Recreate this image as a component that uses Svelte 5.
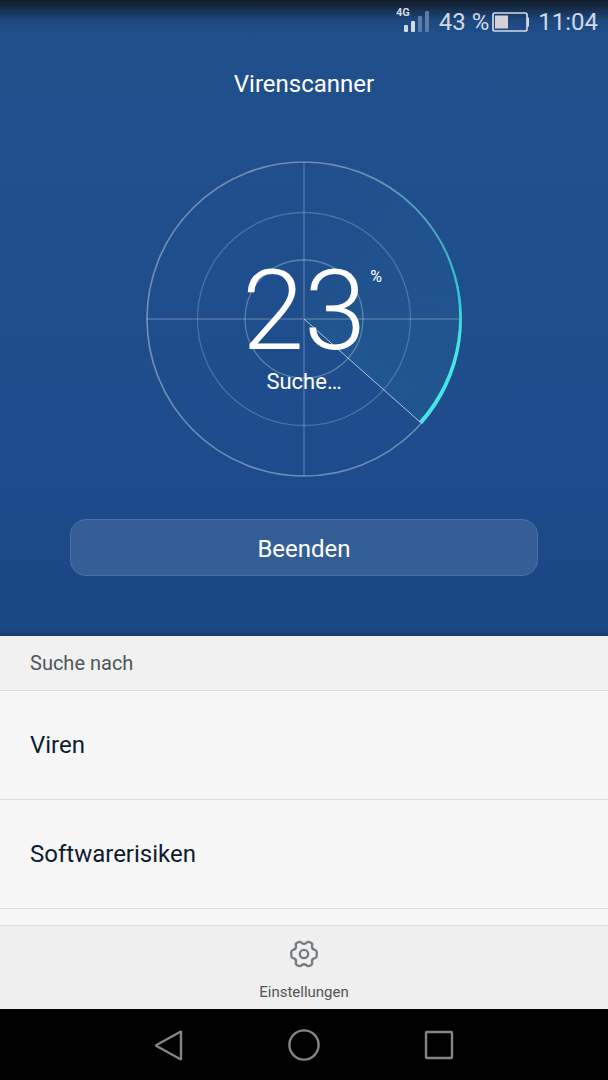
<script>
    let progress = 23;
    let scanning = true;
    const items = ["Viren", "Softwarerisiken"];

    // sweep geometry, the dial is centred on 0,0
    const sweep = 131.6;
    const rad = (sweep * Math.PI) / 180;
    const point = (r) => `${r * Math.sin(rad)} ${-r * Math.cos(rad)}`;
    const arc = `M0 -158A158 158 0 0 1 ${point(158)}L${point(154)}A156 156 0 0 0 0 -158Z`;

    function stop() {
        scanning = false;
    }
</script>

<div class="screen">
    <header class="scanner">
        <div class="status">
            <svg class="signal" width="34" height="28" viewBox="0 0 34 28">
                <text x="0" y="11">4G</text>
                <rect x="8" y="20" width="4" height="7" rx="1" />
                <rect x="15" y="16" width="4" height="11" rx="1" />
                <rect class="dim" x="22" y="11" width="4" height="16" rx="1" />
                <rect class="dim" x="29" y="6" width="4" height="21" rx="1" />
            </svg>
            <span class="battery-text">43 %</span>
            <svg class="battery" width="38" height="20" viewBox="0 0 38 20">
                <rect x="1" y="1" width="34" height="18" rx="2" fill="none" stroke="#d3d9e3" stroke-width="1.7" />
                <rect x="3" y="3.500" width="13" height="13" fill="#d3d2d6" />
                <path d="M35 5.500h2v9h-2z" fill="#d3d9e3" />
            </svg>
            <span class="clock">11:04</span>
        </div>

        <h1>Virenscanner</h1>

        <div class="dial">
            <div class="sweep"></div>
            <svg class="rings" width="320" height="320" viewBox="-160 -160 320 320">
                <defs>
                    <linearGradient id="glow" gradientUnits="userSpaceOnUse" x1="0" y1="-158" x2="0" y2="104">
                        <stop offset="0" stop-color="#46e6e6" stop-opacity="0" />
                        <stop offset="0.15" stop-color="#2cc0cc" stop-opacity="0.5" />
                        <stop offset="0.5" stop-color="#2fc9d3" stop-opacity="0.9" />
                        <stop offset="0.7" stop-color="#46e6e6" />
                        <stop offset="1" stop-color="#46e6e6" />
                    </linearGradient>
                </defs>
                <g fill="none" stroke="#fff">
                    <path d="M-157 0H157M0 -157V157" stroke-opacity="0.22" stroke-width="1.4" />
                    <circle r="59" stroke-opacity="0.28" stroke-width="1.3" />
                    <circle r="106.500" stroke-opacity="0.2" stroke-width="1.3" />
                    <circle r="157" stroke-opacity="0.36" stroke-width="1.7" />
                    <path d={`M0 0L${point(157)}`} stroke-opacity="0.65" />
                </g>
                <path d={arc} fill="url(#glow)" />
            </svg>
            <div class="reading">
                <div class="percent">{progress}<span class="unit">%</span></div>
                <div class="state">{scanning ? "Suche…" : "Beendet"}</div>
            </div>
        </div>

        <button class="stop" on:click={stop}>Beenden</button>
    </header>

    <main>
        <h2>Suche nach</h2>
        <ul>
            {#each items as item}
                <li>{item}</li>
            {/each}
        </ul>
    </main>

    <footer>
        <button class="settings">
            <svg width="30" height="30" viewBox="-15 -15 30 30" fill="none" stroke="#777c80" stroke-width="2.3" stroke-linejoin="round">
                <circle r="4.200" />
                <path d="M-5.500 -11.900Q-3.700 -12.500 -2.500 -11.200Q0 -9.200 2.500 -11.200Q3.700 -12.500 5.500 -11.900L7.200 -11Q8.800 -10 8 -8Q7.700 -4.600 11 -4.200Q12.700 -3.800 12.700 -2V2Q12.700 3.800 11 4.200Q7.700 4.600 8 8Q8.800 10 7.200 11L5.500 11.900Q3.700 12.500 2.500 11.200Q0 9.200 -2.500 11.200Q-3.700 12.500 -5.500 11.900L-7.200 11Q-8.800 10 -8 8Q-7.700 4.600 -11 4.200Q-12.700 3.800 -12.700 2V-2Q-12.700 -3.800 -11 -4.200Q-7.700 -4.600 -8 -8Q-8.800 -10 -7.200 -11Z" />
            </svg>
            <span>Einstellungen</span>
        </button>
    </footer>

    <nav>
        <button aria-label="Zurück">
            <svg width="34" height="34" viewBox="0 0 34 34">
                <path d="M29 4V31Q29 31.500 28 31L4.500 18Q3.700 17.500 4.500 17L28 4Q29 3.500 29 4Z" />
            </svg>
        </button>
        <button aria-label="Startseite">
            <svg width="34" height="34" viewBox="0 0 34 34">
                <circle cx="17" cy="17" r="14.600" />
            </svg>
        </button>
        <button aria-label="Letzte Apps">
            <svg width="34" height="34" viewBox="0 0 34 34">
                <rect x="4" y="4" width="26" height="26" rx="1" />
            </svg>
        </button>
    </nav>
</div>

<style>
    :global(body) {
        margin: 0;
        background: #000;
    }

    .screen {
        display: flex;
        flex-direction: column;
        min-height: 100vh;
        font-family: Roboto, "Liberation Sans", sans-serif;
        background: #f7f7f7;
    }

    button {
        font-family: inherit;
        border: none;
        cursor: pointer;
    }

    .scanner {
        display: flex;
        flex-direction: column;
        align-items: center;
        padding-bottom: 60px;
        color: #fff;
        background:
            linear-gradient(to bottom, #111d2b 0, #14273f 6px, rgba(28, 66, 116, 0.6) 20px, rgba(32, 80, 140, 0) 36px),
            linear-gradient(to top, rgba(20, 50, 96, 0.6) 0, rgba(20, 50, 96, 0) 6px),
            linear-gradient(to bottom, #20508c 0, #1f4e8c 45%, #1d4b8c 75%, #1b4784 92%);
    }

    .status {
        display: flex;
        justify-content: flex-end;
        align-items: center;
        align-self: stretch;
        height: 44px;
        padding: 0 10px;
        box-sizing: border-box;
        font-size: 24px;
        line-height: 28px;
        color: #d3d9e3;
    }

    .signal {
        margin-bottom: 6px;
        fill: #d3d9e3;
    }

    .signal text {
        font-size: 11px;
        font-weight: bold;
    }

    .signal .dim {
        fill: #5b7ca8;
    }

    .battery-text {
        margin: 0 3px 0 9px;
    }

    .clock {
        margin-left: 8px;
    }

    h1 {
        margin: 24px 0 0;
        font-size: 24px;
        line-height: 32px;
        font-weight: 400;
    }

    .dial {
        position: relative;
        width: 320px;
        height: 320px;
        margin: 59px 0 40px;
    }

    .sweep {
        position: absolute;
        inset: 3px;
        border-radius: 50%;
        background: conic-gradient(rgba(44, 130, 160, 0) 0, rgba(44, 130, 160, 0.18) 131.6deg, transparent 131.6deg);
    }

    .rings {
        position: absolute;
        inset: 0;
    }

    .reading {
        position: absolute;
        inset: 0;
        display: flex;
        flex-direction: column;
        align-items: center;
        gap: 9px;
        padding-top: 104px;
    }

    .percent {
        position: relative;
        font-size: 112px;
        line-height: 96px;
        font-weight: 300;
    }

    .unit {
        position: absolute;
        top: 6px;
        left: 100%;
        margin-left: 4px;
        font-size: 16px;
        line-height: 16px;
        font-weight: 400;
    }

    .state {
        font-size: 22px;
        line-height: 28px;
    }

    .stop {
        width: calc(100% - 140px);
        height: 57px;
        padding: 2px 0 0;
        border: 1px solid #4a71a3;
        border-radius: 16px;
        background: #345e96;
        color: #fff;
        font-size: 24px;
    }

    main {
        flex: 1;
    }

    h2 {
        margin: 0;
        padding: 1px 30px 0;
        border-bottom: 1px solid #dcdddf;
        background: #f1f1f1;
        color: #50565a;
        font-size: 20px;
        line-height: 53px;
        font-weight: 400;
    }

    ul {
        margin: 0;
        padding: 0;
        list-style: none;
    }

    li {
        padding: 1px 30px 0;
        border-bottom: 1px solid #dedede;
        color: #0e1c30;
        font-size: 24px;
        line-height: 107px;
    }

    footer {
        display: flex;
        justify-content: center;
        border-top: 1px solid #dedede;
        background: #efefef;
    }

    .settings {
        display: flex;
        flex-direction: column;
        align-items: center;
        gap: 13px;
        padding: 13px 20px 7px;
        background: none;
        color: #50565a;
        font-size: 15px;
        line-height: 20px;
    }

    nav {
        display: flex;
        justify-content: center;
        gap: 61px;
        height: 71px;
        background: #000;
    }

    nav button {
        display: flex;
        align-items: center;
        justify-content: center;
        width: 74px;
        padding: 0;
        background: none;
    }

    nav svg {
        fill: none;
        stroke: #858585;
        stroke-width: 2.4;
        stroke-linejoin: round;
    }
</style>
